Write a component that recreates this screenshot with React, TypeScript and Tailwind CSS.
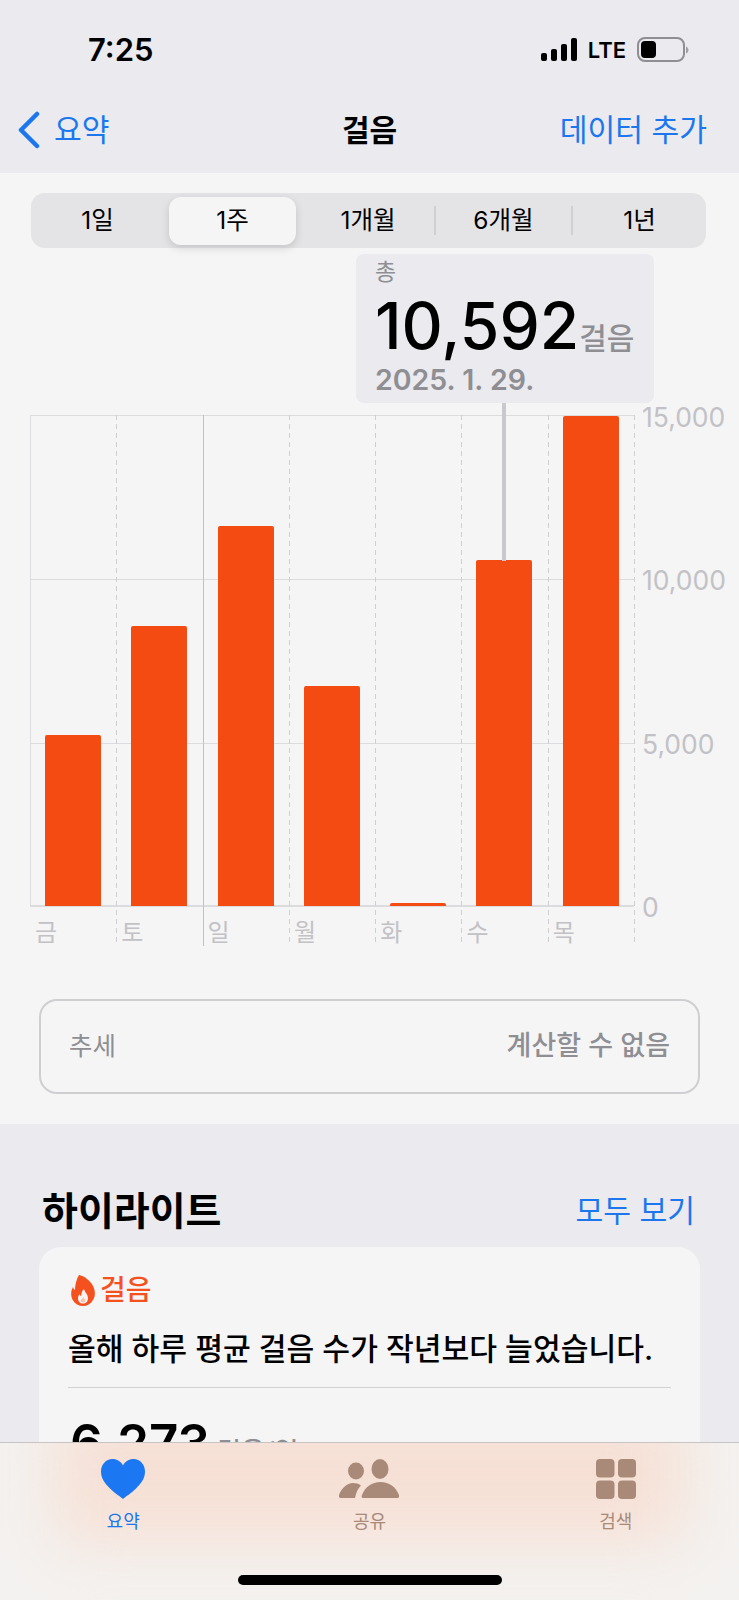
const days = [
  { label: "금", top: 320, line: "edge" },
  { label: "토", top: 211, line: "dash" },
  { label: "일", top: 111, line: "solid" },
  { label: "월", top: 271, line: "dash" },
  { label: "화", top: 488, line: "dash" },
  { label: "수", top: 145, line: "dash" },
  { label: "목", top: 1, line: "dash" },
];

const dashed = "bg-[repeating-linear-gradient(to_bottom,#cfcfd2_0_5px,transparent_5px_9px)]";

function Signal() {
  return (
    <svg width="38" height="24" viewBox="0 0 38 24" fill="#000">
      <rect x="0" y="15" width="6" height="8" rx="2" />
      <rect x="10" y="11" width="6" height="12" rx="2" />
      <rect x="20" y="6" width="6" height="17" rx="2" />
      <rect x="30" y="0" width="6" height="23" rx="2" />
    </svg>
  );
}

function Battery() {
  return (
    <svg width="52" height="26" viewBox="0 0 52 26">
      <rect x="1" y="1" width="46" height="23" rx="7" fill="none" stroke="#8e8e93" strokeWidth="2" />
      <rect x="4" y="4" width="15" height="17" rx="4" fill="#000" />
      <path d="M49 9.500c1.500.5 2.500 2 2.500 3.500s-1 3-2.500 3.500z" fill="#a0a0a5" />
    </svg>
  );
}

function Flame() {
  return (
    <svg width="24" height="31" viewBox="0 0 24 31">
      <path
        d="M8 0c5 1 11 5 14 11 2.500 5 2.500 10 0 14-2.200 4-6 6-10 6s-8-2-10.300-6C-.5 21-.3 16 2 12c.5 1.500 1 2.500 2 3C4 10 5.500 4 8 0z"
        fill="#f4511e"
      />
      <path d="M13 14c.5 3 4 5 4 9.500 0 3-2.200 5-5 5s-5-2-5-5c0-1.800.7-3.200 1.800-4.200.3 1 .7 1.600 1.500 2C10 18.500 11 16 13 14z" fill="#f8f3f0" />
      <path d="M12.300 22c.3 1.500 2 2.200 2 3.800 0 1-1 1.700-2.300 1.700s-2.300-.7-2.300-1.700c0-1.500 2-2.300 2.600-3.800z" fill="#f9c4ae" />
    </svg>
  );
}

function Heart() {
  return (
    <svg width="44" height="40" viewBox="0 0 44 40">
      <path
        d="M22 40c-2-2-8-5.500-13-10.500C4 24.500 0 19.500 0 12.500 0 5.500 5 0 11.500 0 16 0 20 2.500 22 6.500 24 2.500 28 0 32.500 0 39 0 44 5.500 44 12.500c0 7-4 12-9 17-5 5-11 8.500-13 10.500z"
        fill="#1c77f2"
      />
    </svg>
  );
}

function People() {
  return (
    <svg width="60" height="40" viewBox="0 0 60 40" fill="#a98a79">
      <ellipse cx="17" cy="12" rx="8" ry="8.500" />
      <ellipse cx="41" cy="10" rx="8.500" ry="10" />
      <path d="M2 39c-1.500 0-2.500-1-2-3C2.500 29 8 24 14 24c3 0 5.500.7 8 2.500-3 3-5 7-6 12.500z" />
      <path d="M25 39c-2 0-3-1-2-3C26 28 33 23 41.500 23S57 28 60 36c.7 2-.5 3-2 3z" />
    </svg>
  );
}

function Grid() {
  return (
    <svg width="40" height="40" viewBox="0 0 40 40" fill="#a98a79">
      <rect x="0" y="0" width="18.500" height="18.500" rx="4" />
      <rect x="22" y="0" width="18" height="18.500" rx="4" />
      <rect x="0" y="21.500" width="18.500" height="18.500" rx="4" />
      <rect x="22" y="21.500" width="18" height="18.500" rx="4" />
    </svg>
  );
}

export default function App() {
  return (
    <div
      className="relative w-[739px] h-[1600px] overflow-hidden bg-[#eaeaef] text-black"
      style={{ fontFamily: '"Inter", "Noto Sans CJK KR", sans-serif' }}
    >
      {/* status bar */}
      <div className="h-[98px] flex items-start justify-between pl-[88px] pr-[50px] pt-[30px]">
        <span className="text-[31px] leading-[40px] font-semibold">7:25</span>
        <div className="flex items-center gap-[9px] mt-[7px]">
          <Signal />
          <span className="text-[22px] leading-[26px] font-semibold mr-[2px]">LTE</span>
          <Battery />
        </div>
      </div>

      {/* nav */}
      <div className="h-[75px] relative flex items-start justify-between pl-[17px] pr-[32px] pt-[12px]">
        <div className="flex items-center gap-[14px] text-[#1c77ee]">
          <svg width="23" height="38" viewBox="0 0 23 38" fill="none">
            <path d="M20 3L4 19l16 16" stroke="#1c77ee" strokeWidth="4.500" strokeLinecap="round" strokeLinejoin="round" />
          </svg>
          <span className="text-[30.200px] leading-[40px]">요약</span>
        </div>
        <span className="absolute left-[342px] top-[12px] text-[30px] leading-[40px] font-semibold">걸음</span>
        <span className="text-[30.200px] leading-[40px] text-[#1c77ee]">데이터 추가</span>
      </div>

      {/* main section */}
      <div className="h-[951px] bg-[#f5f5f5] pt-[20px]">
        <div className="relative ml-[31px] mr-[33px] h-[55px] rounded-[14px] bg-[#e4e4e6] flex items-center text-[24.500px]">
          <div className="w-[138px] text-center pr-[5px]">1일</div>
          <div className="w-[127px] h-[48px] rounded-[12px] bg-[#f5f5f5] shadow-[0_3px_8px_rgba(0,0,0,0.14)] flex items-center justify-center">1주</div>
          <div className="w-[138px] text-center pl-[6px]">1개월</div>
          <div className="w-[2px] h-[29px] bg-[#d0d0d3]" />
          <div className="w-[135px] text-center">6개월</div>
          <div className="w-[2px] h-[29px] bg-[#d0d0d3]" />
          <div className="flex-1 text-center">1년</div>
        </div>

        {/* chart */}
        <div className="relative h-[745px] mt-[6px]">
          {/* tooltip */}
          <div className="absolute left-[356px] top-0 w-[298px] h-[149px] rounded-[8px] bg-[#eaeaef] pl-[19px] pt-[3px] z-10">
            <div className="text-[23px] leading-[30px] text-[#8e8e93]">총</div>
            <div className="flex items-baseline mt-[5px]">
              <span className="text-[64px] leading-[68px] font-medium">10,592</span>
              <span className="text-[30px] leading-[40px] text-[#8e8e93] font-medium">걸음</span>
            </div>
            <div className="text-[28.500px] leading-[34px] font-semibold text-[#8e8e93] mt-[3px]">2025. 1. 29.</div>
          </div>
          {/* rule from tooltip to bar */}
          <div className="absolute left-[502px] top-[149px] w-[4px] h-[158px] bg-[#c8c8cd] z-10" />

          <div className="absolute left-[30px] top-[161px] w-[604px] border-t border-[#dcdcdf]" />
          <div className="absolute left-[30px] top-[325px] w-[604px] border-t border-[#dcdcdf]" />
          <div className="absolute left-[30px] top-[489px] w-[604px] border-t border-[#dcdcdf]" />
          <div className="absolute left-[30px] top-[651px] w-[604px] border-t-2 border-[#dcdcdf]" />

          <div className="absolute left-[642px] top-[148px] text-[26.500px] leading-[30px] text-[#c2c2c6]">15,000</div>
          <div className="absolute left-[642px] top-[311px] text-[26.500px] leading-[30px] text-[#c2c2c6]">10,000</div>
          <div className="absolute left-[642px] top-[475px] text-[26.500px] leading-[30px] text-[#c2c2c6]">5,000</div>
          <div className="absolute left-[642px] top-[638px] text-[26.500px] leading-[30px] text-[#c2c2c6]">0</div>

          <div className="absolute left-[30px] top-[161px] flex h-[531px]">
            {days.map((d) => (
              <div key={d.label} className="relative w-[86.300px] h-full">
                {d.line === "edge" && <div className="absolute left-0 top-0 w-px h-[491px] bg-[#dcdcdf]" />}
                {d.line === "dash" && <div className={"absolute left-0 top-0 w-px h-full " + dashed} />}
                {d.line === "solid" && <div className="absolute left-0 top-0 w-px h-full bg-[#c2c2c6]" />}
                <div
                  className="absolute left-[15px] w-[56px] bg-[#f34b12] rounded-t-[2px]"
                  style={{ top: d.top, height: 491 - d.top }}
                />
                <div className="absolute left-[5px] top-[503px] text-[24px] leading-[30px] text-[#c2c2c6]">{d.label}</div>
              </div>
            ))}
            <div className={"w-px h-full " + dashed} />
          </div>
        </div>

        {/* trend */}
        <div className="mx-[39px] h-[95px] rounded-[18px] border-2 border-[#cfcfd2] flex items-center justify-between pl-[28px] pr-[28px]">
          <span className="text-[25.500px] text-[#8e8e93]">추세</span>
          <span className="text-[27px] text-[#8e8e93] font-medium">계산할 수 없음</span>
        </div>
      </div>

      {/* highlights */}
      <div className="pt-[63px]">
        <div className="flex items-center justify-between pl-[42px] pr-[44px] h-[48px]">
          <span className="text-[39px] leading-[48px] font-bold">하이라이트</span>
          <span className="text-[30.200px] leading-[40px] text-[#1c77ee]">모두 보기</span>
        </div>
        <div className="mx-[39px] mt-[12px] rounded-[22px] bg-[#f5f5f5] px-[29px] pt-[26px] h-[300px]">
          <div className="flex items-center gap-[5px] h-[34px] ml-[3px]">
            <Flame />
            <span className="text-[28px] leading-[34px] text-[#f4511e] font-medium">걸음</span>
          </div>
          <div className="mt-[22px] text-[30.200px] leading-[40px] font-medium whitespace-nowrap">올해 하루 평균 걸음 수가 작년보다 늘었습니다.</div>
          <div className="mt-[18px] border-t border-[#d2d2d5]" />
          <div className="flex items-baseline gap-[7px] mt-[25px] ml-[2px]">
            <span className="text-[51px] leading-[60px] font-semibold">6,273</span>
            <span className="text-[26px] leading-[30px] text-[#8e8e93] font-medium">걸음/일</span>
          </div>
        </div>
      </div>

      {/* tab bar */}
      <div className="absolute left-0 right-0 bottom-0 h-[158px] border-t border-[#c8c4c4] bg-[#f4f2f0] overflow-hidden">
        <div className="absolute left-[55px] right-[55px] -top-[40px] h-[140px] bg-[#f6e0d5] blur-[32px]" />
        <div className="relative grid grid-cols-3 pt-[16px]">
          <div className="flex flex-col items-center gap-[8px]">
            <Heart />
            <span className="text-[18px] leading-[30px] text-[#1c77ee]">요약</span>
          </div>
          <div className="flex flex-col items-center gap-[8px]">
            <People />
            <span className="text-[18px] leading-[30px] text-[#a98a79]">공유</span>
          </div>
          <div className="flex flex-col items-center gap-[8px]">
            <Grid />
            <span className="text-[18px] leading-[30px] text-[#a98a79]">검색</span>
          </div>
        </div>
        <div className="absolute left-[238px] bottom-[15px] w-[264px] h-[10px] rounded-full bg-black" />
      </div>
    </div>
  );
}
